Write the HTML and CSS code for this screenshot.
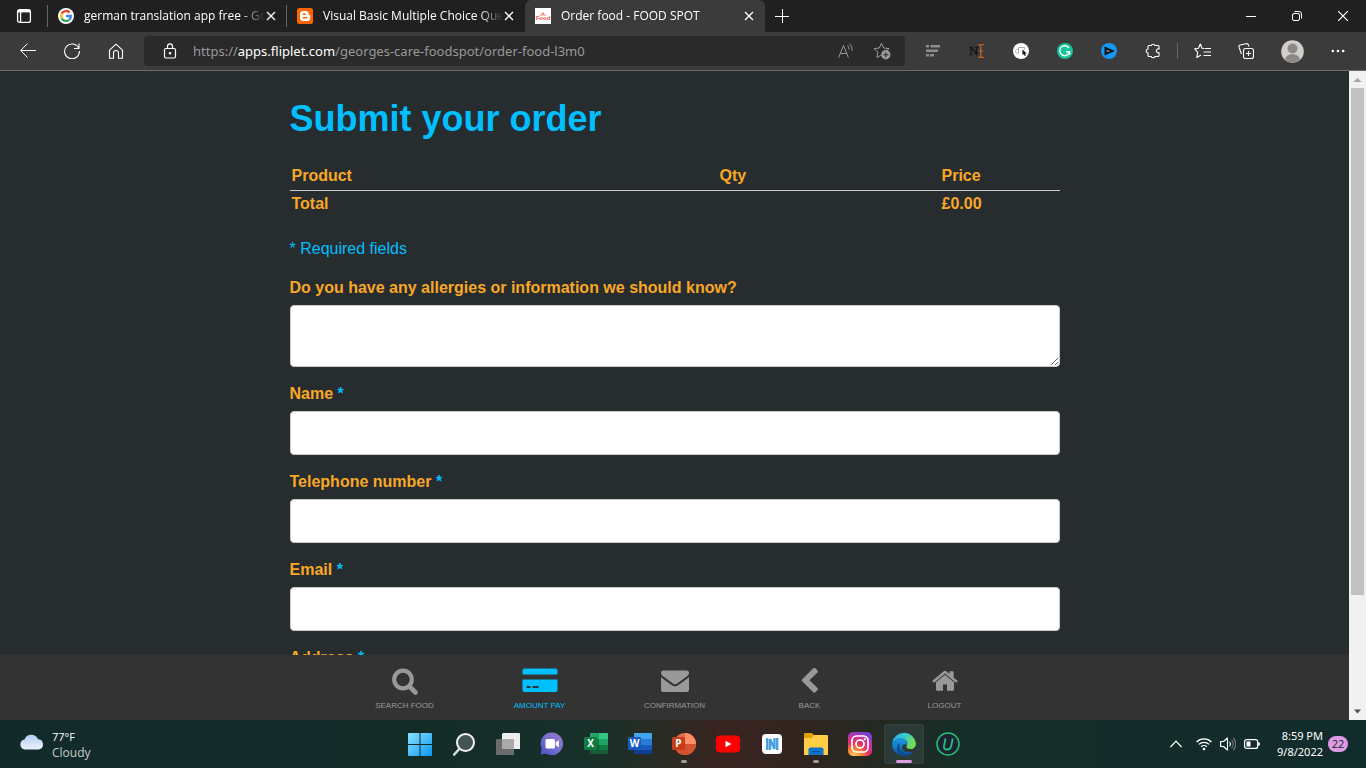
FILE: index.html
```html
<!DOCTYPE html>
<html lang="en">
<head>
<meta charset="utf-8">
<meta name="viewport" content="width=device-width, initial-scale=1">
<title>Order food - FOOD SPOT</title>
<link rel="stylesheet" href="styles.css">
</head>
<body>
<header class="tabstrip">
  <button class="workspace" aria-label="Tab actions"><svg width="16" height="16" viewBox="0 0 16 16" fill="none" stroke="#fff" stroke-width="1.3"><rect x="1.6" y="1.6" width="12.8" height="12.8" rx="2"/><path d="M2 3.2h12" stroke-width="2.4"/><path d="M4.6 4v10"/></svg></button>
  <div class="tab">
    <svg width="16" height="16" viewBox="0 0 16 16"><circle cx="8" cy="8" r="8" fill="#fff"/><g fill="none" stroke-width="2.3"><path d="M11.6 4.6A4.9 4.9 0 0 0 3.7 5.6" stroke="#ea4335"/><path d="M3.7 5.6a4.9 4.9 0 0 0 0 4.8" stroke="#fbbc05"/><path d="M3.7 10.4a4.9 4.9 0 0 0 7.4 1.4" stroke="#34a853"/><path d="M11.1 11.8A4.9 4.9 0 0 0 12.9 8H8" stroke="#4285f4"/></g></svg>
    <span class="tab-title">german translation app free - Go</span>
    <button class="tab-close" aria-label="Close tab"><svg width="10" height="10" viewBox="0 0 10 10" stroke="#fff" stroke-width="1.3"><path d="M1 1l8 8M9 1l-8 8"/></svg></button>
  </div>
  <div class="tab">
    <svg width="16" height="16" viewBox="0 0 16 16"><rect width="16" height="16" rx="2.5" fill="#ff6600"/><path d="M6.4 3h2.2a3 3 0 0 1 3 3c0 .7.3 1 .9 1s.7.3.7.8v2a3.2 3.2 0 0 1-3.2 3.2H6.3A3.2 3.2 0 0 1 3 9.800V6.300A3.300 3.300 0 0 1 6.400 3z" fill="#fff"/><path d="M6.200 6.200h2.200M6.200 9.800h3.600" stroke="#ff6600" stroke-width="1.400" stroke-linecap="round"/></svg>
    <span class="tab-title">Visual Basic Multiple Choice Que</span>
    <button class="tab-close" aria-label="Close tab"><svg width="10" height="10" viewBox="0 0 10 10" stroke="#fff" stroke-width="1.3"><path d="M1 1l8 8M9 1l-8 8"/></svg></button>
  </div>
  <div class="tab tab-active">
    <svg width="16" height="16" viewBox="0 0 16 16"><path fill="#fff" d="M0 0h16v16H0z"/><path d="M5 8l3-3.500M8 8V5l3 3" stroke="#f0695f" fill="none"/><text x="8" y="12" font-family="Liberation Sans, sans-serif" font-size="6" font-weight="bold" text-anchor="middle" fill="#f0544a">Food</text></svg>
    <span class="tab-title">Order food - FOOD SPOT</span>
    <button class="tab-close" aria-label="Close tab"><svg width="10" height="10" viewBox="0 0 10 10" stroke="#fff" stroke-width="1.3"><path d="M1 1l8 8M9 1l-8 8"/></svg></button>
  </div>
  <button class="new-tab" aria-label="New tab"><svg width="14" height="14" viewBox="0 0 14 14" stroke="#fff"><path d="M7.500 0v14M0 7.500h14"/></svg></button>
  <div class="window-buttons">
    <button aria-label="Minimize"><svg width="10" height="10" viewBox="0 0 10 10" stroke="#fff"><path d="M0 5.500h10"/></svg></button>
    <button aria-label="Restore"><svg width="10" height="10" viewBox="0 0 10 10" stroke="#fff" fill="none"><rect x=".5" y="2.500" width="7" height="7" rx="1.500"/><path d="M2.500.5H7A2.500 2.500 0 0 1 9.500 3v4.500"/></svg></button>
    <button aria-label="Close"><svg width="10" height="10" viewBox="0 0 10 10" stroke="#fff" stroke-width="1.200"><path d="M0 0l10 10M10 0L0 10"/></svg></button>
  </div>
</header>

<div class="toolbar">
  <div class="nav-buttons">
    <button aria-label="Back"><svg width="16" height="16" viewBox="0 0 16 16" fill="none" stroke="#fff"><path d="M16 7.500H1M7.500.5L.7 7.500l6.800 7"/></svg></button>
    <button aria-label="Refresh"><svg width="16" height="16" viewBox="0 0 16 16" fill="none" stroke="#fff" stroke-width="1.100"><path d="M14.700 5.200A7.400 7.400 0 1 0 15.400 8M15 .5v5h-5"/></svg></button>
    <button aria-label="Home"><svg width="16" height="16" viewBox="0 0 16 16" fill="none" stroke="#fff" stroke-width="1.100"><path d="M1.500 7.200L8 1.200l6.500 6v8h-4V10a2.500 2.500 0 0 0-5 0v5.200h-4z" stroke-linejoin="round"/></svg></button>
  </div>
  <div class="address">
    <svg class="lock" width="14" height="16" viewBox="0 0 14 16" fill="none" stroke="#fff" stroke-width="1.200"><rect x="1.500" y="5.500" width="11" height="9.500" rx="1.500"/><path d="M4.500 5.500V3.300a2.500 2.500 0 0 1 5 0v2.200"/><circle cx="7" cy="10.200" r=".7" fill="#fff"/></svg>
    <span class="url">https://<b>apps.fliplet.com</b>/georges-care-foodspot/order-food-l3m0</span>
    <button aria-label="Read aloud"><svg width="16" height="16" viewBox="0 0 16 16" fill="none" stroke="#9a9a9a"><path d="M.7 14.500L5.500 2.500l4.800 12M2.300 10.500h6.400M9.500 2.500a4 4 0 0 1 1.500 4M11.500.7a8 8 0 0 1 2.700 7"/></svg></button>
    <button aria-label="Add to favorites"><svg width="18" height="18" viewBox="0 0 18 18" fill="none" stroke="#9a9a9a"><path d="M8.500 1.200l2.200 4.800 5.300.6-3 3M8.500 1.200L6.300 6 1 6.600l3.900 3.600-1 5.300 4-2.200" stroke-linejoin="round"/><circle cx="12.800" cy="12.800" r="4.700" fill="#9a9a9a" stroke="none"/><path d="M12.800 10.300v5M10.300 12.800h5" stroke="#2a2a2a"/></svg></button>
  </div>
  <div class="extensions">
    <button aria-label="Text extension"><svg width="16" height="12" viewBox="0 0 16 12" fill="#8b8f8c"><path d="M1 0h3v2.500H1zM5.500 0H15v2.500H5.500zM1 4.500h12V7H1zM1 9h3v2.500H1zM5 9h4v2.500H5z"/></svg></button>
    <button aria-label="Notes extension"><svg width="16" height="16" viewBox="0 0 16 16"><text x="0" y="12" font-family="Liberation Serif, serif" font-size="13" fill="#111" stroke="#111" stroke-width=".4">N</text><path d="M9 1.500q2.500 0 2.500 1.500Q11.500 1.500 15 1.500M9 14.500q2.500 0 2.500-1.500 0 1.500 3.500 1.500M11.800 3v10M10 8h4" stroke="#d2691e" stroke-width="1.200" fill="none"/></svg></button>
    <button aria-label="Cursor extension"><svg width="16" height="16" viewBox="0 0 16 16"><circle cx="8" cy="8" r="8" fill="#fff"/><path d="M5.500 6.500a2 2 0 1 0 0 3.500V4.500h6v2" stroke="#aaa" fill="none"/><path d="M9.500 6.500v5.700l1.300-1.200 1 2 1.100-.6-1-1.900h1.900z" fill="#111"/></svg></button>
    <button aria-label="Grammar checker"><svg width="16" height="16" viewBox="0 0 16 16"><circle cx="8" cy="8" r="8" fill="#15c39a"/><path d="M12 5A5 5 0 1 0 12.700 8.700H9M12.700 8.700v2.800" stroke="#fff" stroke-width="1.400" fill="none"/></svg></button>
    <button aria-label="Video extension"><svg width="16" height="16" viewBox="0 0 16 16"><circle cx="8" cy="8" r="8" fill="#1698f5"/><path d="M3.500 3.500L14 8 3.500 12.500z" fill="#10151c"/><path d="M5.500 7.200h3v1.600h-3z" fill="#889"/></svg></button>
    <button aria-label="Extensions"><svg width="16" height="16" viewBox="0 0 16 16" fill="none" stroke="#fff" stroke-width="1.100"><path d="M4 2.500h2.200a2 1.800 0 0 1 3.800 0h3q1 0 1 1v2.400a2 2 0 1 0 0 3.800v2.800q0 1-1 1h-3a2 1.800 0 0 1-3.800 0H4q-1 0-1-1V10a1.800 2 0 0 1 0-4V3.500q0-1 1-1z"/></svg></button>
    <span class="divider"></span>
    <button aria-label="Favorites"><svg width="17" height="16" viewBox="0 0 17 16" fill="none" stroke="#fff" stroke-width="1.100"><path d="M10 5.500L8 5.300 6.300 1 4.500 5.300.7 5.900l3 3.400-.9 5.200L7 12M10.500 5.500H17M9.500 9H17M9.500 12.500H17" stroke-linejoin="round"/></svg></button>
    <button aria-label="Collections"><svg width="16" height="16" viewBox="0 0 16 16" fill="none" stroke="#fff" stroke-width="1.100"><rect x="5.500" y="5.500" width="10" height="10" rx="2"/><path d="M10.500 8v5M8 10.500h5M3.500 11L1 4.200Q.5 2.500 2 2L8 .7q2-.4 2.500 1.300l.5 1.500"/></svg></button>
    <button class="profile" aria-label="Profile"><svg width="23" height="23" viewBox="0 0 23 23"><circle cx="11.500" cy="11.500" r="11.300" fill="#d1cfcb"/><circle cx="11.500" cy="8.500" r="5" fill="#8d8985"/><path d="M4 19.800a7.500 5.800 0 0 1 15 0 11 11 0 0 1-15 0z" fill="#8d8985"/></svg></button>
    <button aria-label="Settings and more"><svg width="14" height="4" viewBox="0 0 14 4" fill="#fff"><circle cx="1.800" cy="2" r="1.300"/><circle cx="7" cy="2" r="1.300"/><circle cx="12.200" cy="2" r="1.300"/></svg></button>
  </div>
</div>

<div class="viewport">
  <div class="page">
    <main class="scroller">
      <form class="order">
        <h1>Submit your order</h1>
        <table class="cart">
          <colgroup><col class="col-product"><col class="col-qty"><col></colgroup>
          <thead><tr><th>Product</th><th>Qty</th><th>Price</th></tr></thead>
          <tbody><tr><th>Total</th><td></td><td>£0.00</td></tr></tbody>
        </table>
        <p class="required">* Required fields</p>
        <div class="field"><label for="allergies">Do you have any allergies or information we should know?</label><textarea id="allergies"></textarea></div>
        <div class="field"><label for="name">Name <span>*</span></label><input id="name" type="text"></div>
        <div class="field"><label for="phone">Telephone number <span>*</span></label><input id="phone" type="tel"></div>
        <div class="field"><label for="email">Email <span>*</span></label><input id="email" type="email"></div>
        <div class="field"><label for="address">Address <span>*</span></label><input id="address" type="text"></div>
      </form>
    </main>
    <nav class="app-nav">
      <a href="#search"><svg width="28" height="28" viewBox="0 0 28 28" fill="none" stroke="currentColor"><circle cx="12" cy="11.500" r="8.800" stroke-width="4.200"/><path d="M18.500 18.500l6 6" stroke-width="4.600" stroke-linecap="round"/></svg><span>SEARCH FOOD</span></a>
      <a href="#pay" class="current"><svg width="36" height="28" viewBox="0 0 36 28" fill="currentColor"><path d="M2.500.5h31q2 0 2 2v4H.5v-4q0-2 2-2zM.5 11.500h35V22q0 2-2 2h-31q-2 0-2-2zM4.500 18v2h4v-2zm6 0v2h6v-2z" fill-rule="evenodd"/></svg><span>AMOUNT PAY</span></a>
      <a href="#confirmation"><svg width="28" height="28" viewBox="0 0 28 28" fill="currentColor"><path d="M2.500 2.500h23Q28 2.500 28 4.700c0 2-1.500 3.300-3 4.300l-8.500 6.300q-2.500 1.700-5 0L3 9C1.500 8 0 6.500 0 4.700Q0 2.500 2.500 2.500zM0 9q1 1.200 3 2.500L10.500 17q3.500 2.500 7 0L25 11.500q2-1.300 3-2.500v12.500q0 2.500-2.500 2.500h-23Q0 24 0 21.500z"/></svg><span>CONFIRMATION</span></a>
      <a href="#back"><svg width="28" height="28" viewBox="0 0 28 28" fill="currentColor"><path d="M17.300-.7q1-.9 2 0l2.200 2.200q.9 1 0 2L13.500 11.200l8 7.900q.9 1 0 2l-2.200 2.200q-1 .9-2 0L6.200 12.200q-.9-1 0-2z" transform="translate(0 1)"/></svg><span>BACK</span></a>
      <a href="#logout"><svg width="28" height="28" viewBox="0 0 28 28" fill="currentColor"><path d="M14 6.800l9 7.500v7.500q0 1-1 1h-6v-6.300h-4v6.300H6q-1 0-1-1v-7.500z"/><path d="M12.700 3.300q1.300-1 2.600 0l3.200 2.700V3.800q0-.6.600-.6h3q.6 0 .6.600v5.600l3.600 3q.5.500.1 1l-.9 1q-.5.400-1 0L14 5.600l-10.500 8.800q-.5.400-1 0l-.9-1q-.4-.5.100-1z"/></svg><span>LOGOUT</span></a>
    </nav>
  </div>
  <div class="scrollbar">
    <svg width="17" height="17" viewBox="0 0 17 17"><path d="M4.500 11L8.500 7l4 4z" fill="#a3a3a3"/></svg>
    <div class="track"><div class="thumb"></div></div>
    <svg width="17" height="17" viewBox="0 0 17 17"><path d="M5 6.500l3.500 4 3.500-4z" fill="#505050"/></svg>
  </div>
</div>

<footer class="taskbar">
  <button class="weather">
    <svg width="24" height="16" viewBox="0 0 24 16"><defs><linearGradient id="cloud" x2="0" y2="1"><stop stop-color="#b4cdf5"/><stop offset="1" stop-color="#edf2fb"/></linearGradient></defs><path d="M5 15.500a5 5 0 0 1-.5-9.900A7.200 7.200 0 0 1 18 5.200a5.200 5.200 0 0 1 .8 10.300z" fill="url(#cloud)"/></svg>
    <span class="weather-text"><span class="temp">77°F</span><span>Cloudy</span></span>
  </button>
  <div class="apps">
    <button aria-label="Start"><svg width="24" height="24" viewBox="0 0 24 24"><defs><linearGradient id="win" x2="1" y2="1"><stop stop-color="#8ae4ff"/><stop offset="1" stop-color="#0a95f5"/></linearGradient></defs><path fill="url(#win)" d="M0 2Q0 1 1 1h10.500v11H0zM12.500 1H23q1 0 1 1v10H12.500zM0 13h11.500v11H1q-1 0-1-1zM12.500 13H24v10q0 1-1 1H12.500z"/></svg></button>
    <button aria-label="Search"><svg width="24" height="24" viewBox="0 0 24 24"><circle cx="13.500" cy="10.500" r="8.500" fill="#435553" stroke="#f2f2f2" stroke-width="2"/><path d="M7.200 17l-5 5.500" stroke="#ddd" stroke-width="2.600" stroke-linecap="round"/></svg></button>
    <button aria-label="Task view"><svg width="24" height="24" viewBox="0 0 24 24"><path fill="#eee" d="M7 1h16q1 0 1 1v15H6V2z"/><path fill="#6c6c6c" d="M0 8q0-1 1-1h5v10h12v6H1q-1 0-1-1z"/><path fill="#aaa" d="M6 7h12v10H6z"/></svg></button>
    <button aria-label="Chat"><svg width="24" height="24" viewBox="0 0 24 24"><defs><linearGradient id="chat" x1="1" x2="0" y2="1"><stop stop-color="#9b79c9"/><stop offset=".5" stop-color="#7470cf"/><stop offset="1" stop-color="#4b50c9"/></linearGradient></defs><path fill="url(#chat)" d="M12 .5a11.300 11.300 0 1 1-5.500 21.300L.5 22.500l1.200-5.700A11.300 11.300 0 0 1 12 .5z"/><rect x="5.500" y="7" width="9.500" height="9.500" rx="1.500" fill="#fff"/><path fill="#fff" d="M15.800 10.500l3-2.500v7.500l-3-2.500z"/></svg></button>
    <button aria-label="Excel"><svg width="24" height="24" viewBox="0 0 24 24"><path fill="#21a366" d="M6 1h9v6H6z"/><path fill="#33c481" d="M15 1h8q1 0 1 1v5h-9z"/><path fill="#107c41" d="M6 7h9v6H6z"/><path fill="#21a366" d="M15 7h9v6h-9z"/><path fill="#185c37" d="M6 13h9v9H6z"/><path fill="#107c41" d="M15 13h9v5h-9z"/><path fill="#185c37" d="M15 18h9v3q0 1-1 1h-8z"/><rect y="5" width="13" height="13" rx="1" fill="#107c41"/><text x="6.500" y="15.300" text-anchor="middle" class="tile-letter">X</text></svg></button>
    <button aria-label="Word"><svg width="24" height="24" viewBox="0 0 24 24"><path fill="#41a5ee" d="M6 1h17q1 0 1 1v5H6z"/><path fill="#2b7cd3" d="M6 7h18v6H6z"/><path fill="#185abd" d="M6 13h18v5H6z"/><path fill="#103f91" d="M6 18h18v3q0 1-1 1H6z"/><rect y="5" width="13" height="13" rx="1" fill="#185abd"/><text x="6.500" y="15.300" text-anchor="middle" class="tile-letter">W</text></svg></button>
    <button class="running" aria-label="PowerPoint"><svg width="24" height="24" viewBox="0 0 24 24"><circle cx="13" cy="12" r="11" fill="#ed6c47"/><path fill="#ff8f6b" d="M13 1a11 11 0 0 1 11 11H13z"/><path fill="#d35230" d="M2 12h22a11 11 0 0 1-22 0z"/><rect y="5" width="13" height="13" rx="1" fill="#c43e1c"/><text x="6.500" y="15.300" text-anchor="middle" class="tile-letter">P</text></svg></button>
    <button aria-label="YouTube"><svg width="24" height="24" viewBox="0 0 24 24"><rect y="3.500" width="24" height="17" rx="4" fill="#f00"/><path fill="#fff" d="M9.500 8.700v6.600l6-3.300z"/></svg></button>
    <button aria-label="N reader"><svg width="24" height="24" viewBox="0 0 24 24"><rect x="2" y="2" width="20" height="20" rx="4" fill="#fff"/><path d="M7.200 18V6M10 18V7L14.500 17V6M17.200 18V6" stroke="#4a9fe0" stroke-width="2.400" fill="none"/></svg></button>
    <button class="running" aria-label="File Explorer"><svg width="24" height="24" viewBox="0 0 24 24"><path d="M0 2q0-1 1-1h7l2.500 2.500V8H0z" fill="#e0a000"/><path d="M0 6h7.500L10 3h13q1 0 1 1v19H0z" fill="#ffce44"/><path d="M4.500 23v-5.500q0-2 2-2h11q2 0 2 2V23z" fill="#0b74cc"/><path d="M8 19.500h8" stroke="#07549d"/></svg></button>
    <button aria-label="Instagram"><svg width="24" height="24" viewBox="0 0 24 24"><defs><radialGradient id="insta" cx=".25" cy="1.050" r="1.100"><stop stop-color="#ffd75e"/><stop offset=".3" stop-color="#f98a35"/><stop offset=".55" stop-color="#e6315f"/><stop offset=".8" stop-color="#c333a4"/><stop offset="1" stop-color="#7a3fd0"/></radialGradient></defs><rect width="24" height="24" rx="5" fill="url(#insta)"/><g fill="none" stroke="#fff" stroke-width="1.700"><rect x="4" y="4" width="16" height="16" rx="4.500"/><circle cx="12" cy="12" r="4"/></g><circle cx="16.800" cy="7.200" r="1.100" fill="#fff"/></svg></button>
    <button class="running active" aria-label="Microsoft Edge"><svg width="24" height="24" viewBox="0 0 24 24"><defs><linearGradient id="edge1" x2="1" y2=".4"><stop stop-color="#2da8ea"/><stop offset=".5" stop-color="#35c8d0"/><stop offset="1" stop-color="#72dc55"/></linearGradient><linearGradient id="edge2" x2="0" y2="1"><stop stop-color="#1b9de2"/><stop offset="1" stop-color="#0b59b0"/></linearGradient></defs><path d="M.2 11A12 12 0 0 1 24 11.500c0 3.500-2.500 5.500-5.500 5.500-2.800 0-4.500-1.200-4-2.500 1.500-2 1-6-3-7.500C7 5.500 2 7.500.2 11z" fill="url(#edge1)"/><path d="M0 12C1 7.500 5 5.500 9 6c4.500.8 6.500 4.500 5.500 7.500-1-2-4-1.500-4.500 1-.5 3.500 3 7 10.500 5.500A12 12 0 0 1 0 12z" fill="url(#edge2)"/><path d="M8 10.500C6 15 9 21 15.500 21.500q3 .3 6.500-2.500a12 12 0 0 1-11 5C4 22 3 14 8 10.500z" fill="#0c4a93"/></svg></button>
    <button aria-label="Uninstaller"><svg width="24" height="24" viewBox="0 0 24 24" fill="none"><circle cx="12" cy="12" r="11" fill="#1e2233" stroke="#21c17a" stroke-width="1.500"/><path d="M9.500 6.500L8 14q-.5 3.500 3 3.500t4.200-3.500l1.500-7.500" stroke="#21c17a" stroke-width="1.800"/></svg></button>
  </div>
  <div class="tray">
    <button aria-label="Show hidden icons"><svg width="12" height="8" viewBox="0 0 12 8" fill="none" stroke="#fff" stroke-width="1.200"><path d="M.5 7L6 1.200 11.500 7"/></svg></button>
    <button class="status" aria-label="Network, volume and battery">
      <svg width="16" height="14" viewBox="0 0 16 14" fill="none" stroke="#fff" stroke-width="1.300"><path d="M.6 5a10.400 10.400 0 0 1 14.800 0M2.900 7.400a7.200 7.200 0 0 1 10.200 0M5.200 9.800a4 4 0 0 1 5.600 0"/><circle cx="8" cy="12" r="1.300" fill="#fff" stroke="none"/></svg>
      <svg width="16" height="14" viewBox="0 0 16 14" fill="none" stroke="#fff" stroke-width="1.100"><path d="M.6 4.500h2.900L7.500 1v12L3.500 9.500H.6z" stroke-linejoin="round"/><path d="M9.500 4.800a3 3 0 0 1 0 4.400"/><path d="M11.500 2.800a6 6 0 0 1 0 8.400M13.300 1a8.500 8.500 0 0 1 0 12" stroke="#6d7b7b"/></svg>
      <svg width="16" height="12" viewBox="0 0 16 12" fill="none" stroke="#fff" stroke-width="1.200"><rect x=".6" y="1.600" width="13" height="8.800" rx="2"/><path d="M2.500 3.500h4v5h-4z" fill="#fff" stroke="none"/><path d="M15 4.500v3" stroke-width="1.800"/></svg>
    </button>
    <button class="clock"><span>8:59 PM</span><span>9/8/2022</span></button>
    <button class="badge" aria-label="22 notifications">22</button>
  </div>
</footer>
</body>
</html>
```
FILE: styles.css
```css
* { box-sizing: border-box; }
body { margin: 0; height: 100vh; display: flex; flex-direction: column; overflow: hidden; background: #272c2f; font-family: "Open Sans", "Noto Sans", sans-serif; font-size: 12px; color: #fff; }
button { margin: 0; padding: 0; border: 0; background: none; color: inherit; font: inherit; display: flex; align-items: center; justify-content: center; }
svg { display: block; flex: none; }

.tabstrip { display: flex; flex: none; height: 32px; background: #202020; }
.workspace { width: 48px; border-right: 1px solid transparent; border-image: linear-gradient(transparent 6px, #666 6px 26px, transparent 26px) 1; }
.tab { display: flex; align-items: center; width: 239px; padding: 0 10px; border-right: 1px solid transparent; border-image: linear-gradient(transparent 6px, #666 6px 26px, transparent 26px) 1; }
.tab + .tab { width: 238px; border-image: none; }
.tab-title { flex: 1; min-width: 0; margin: 0 1px 0 10px; overflow: hidden; white-space: nowrap; line-height: 20px; mask-image: linear-gradient(90deg, #000 calc(100% - 24px), transparent); }
.tab + .tab-active { width: 240px; background: #3b3b3b; border-radius: 6px 6px 0 0; }
.tab-close { width: 10px; height: 20px; }
.new-tab { width: 34px; }
.window-buttons { display: flex; margin-left: auto; }
.window-buttons button { width: 46px; }

.toolbar { display: flex; flex: none; align-items: center; height: 39px; padding: 0 6px; background: #3b3b3b; border-bottom: 1px solid #6d6d6d; }
.nav-buttons, .extensions { display: flex; align-items: center; }
.nav-buttons button, .extensions button { width: 44px; height: 30px; }
.address { display: flex; flex: 1; align-items: center; height: 30px; margin: 0 6px; padding: 0 5px 0 19px; background: #2a2a2a; border-radius: 4px; }
.url { flex: 1; margin-left: 16px; font-family: "Noto Sans", sans-serif; font-size: 13px; line-height: 20px; white-space: nowrap; color: #999; }
.url b { font-weight: normal; color: #fff; }
.address button { width: 36px; height: 30px; }
.divider { width: 1px; height: 16px; margin: 0 2px; background: #666; }
.extensions .profile { margin: 0 2px; }

.viewport { display: flex; flex: 1; min-height: 0; }
.page { display: flex; flex: 1; flex-direction: column; min-width: 0; font-family: "Liberation Sans", Arial, sans-serif; }
.scroller { flex: 1; min-height: 0; overflow: hidden; background: #272c2f; }
.order { max-width: 770px; margin: 0 auto; padding-top: 28px; font-size: 16px; line-height: 20px; color: #f9a825; }
.order h1 { margin: 0 0 24px; font-size: 36px; line-height: 40px; color: #00bfff; }
.cart { width: 100%; table-layout: fixed; border-collapse: collapse; font-weight: bold; }
.cart th, .cart td { padding: 3px 1px 1px 2px; text-align: left; }
.cart thead th { padding-bottom: 4px; border-bottom: 1px solid #ccc; }
.col-product { width: 428px; }
.col-qty { width: 222px; }
.required { margin: 24px 0 18px; color: #00bfff; }
.field { display: flex; flex-direction: column; gap: 7px; margin-bottom: 16px; font-weight: bold; }
.field label { padding-top: 1px; }
.field span { color: #00bfff; }
.field input, .field textarea { width: 100%; height: 44px; padding: 6px 12px; border: 1px solid #ccc; border-radius: 4px; background: #fff; font: inherit; font-weight: normal; }
.field textarea { height: 62px; resize: vertical; }

.app-nav { display: grid; grid-template-columns: repeat(5, minmax(0, 135px)); justify-content: center; flex: none; height: 65px; background: #333; }
.app-nav a { display: flex; flex-direction: column; align-items: center; gap: 4px; padding-top: 13px; color: #999; font-size: 8px; line-height: 12px; text-decoration: none; }
.app-nav .current { color: #00bfff; }

.scrollbar { display: flex; flex-direction: column; width: 17px; background: #f1f1f1; }
.track { flex: 1; padding: 0 2px; }
.thumb { height: 82.5%; background: #c1c1c1; }

.taskbar { display: grid; grid-template-columns: 1fr auto 1fr; flex: none; height: 48px; background: linear-gradient(90deg, #132a2b 0%, #122c28 30%, #19302a 44%, #2b2a22 49%, #3a2422 53%, #33241f 58%, #222a22 65%, #152e29 71%, #122b2c 100%); }
.weather { justify-content: flex-start; justify-self: start; padding-left: 20px; gap: 8px; }
.weather svg { margin-bottom: 4px; }
.weather-text { display: flex; flex-direction: column; text-align: left; line-height: 16px; color: #c5cccb; padding-top: 2px; }
.weather-text .temp { color: #fff; font-size: 11px; }
.apps { display: flex; align-items: center; gap: 4px; padding-left: 1px; }
.apps button { position: relative; width: 40px; height: 40px; border-radius: 4px; }
.apps .active { background: #2b3a36; box-shadow: inset 0 0 0 1px #33423e; }
.running::after { content: ""; position: absolute; bottom: 1px; width: 6px; height: 3px; border-radius: 2px; background: #9b9b97; }
.running.active::after { width: 16px; background: #dd9be6; }
.tile-letter { font: bold 10px "Open Sans", sans-serif; fill: #fff; }
.tray { display: flex; align-items: center; justify-content: flex-end; padding-right: 18px; }
.status { gap: 8px; margin: 0 17px 0 14px; }
.clock { flex-direction: column; align-items: flex-end; line-height: 16px; font-family: "Noto Sans", sans-serif; font-size: 11px; }
.badge { width: 20px; height: 16px; margin-left: 5px; border-radius: 8px; background: #dd9be6; color: #222; font-size: 11px; line-height: 16px; }
```
